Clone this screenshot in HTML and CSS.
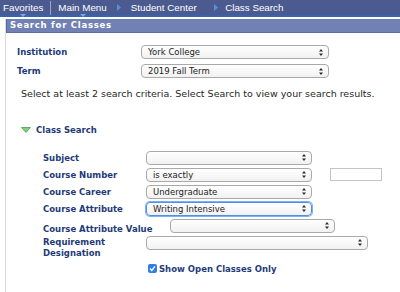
FILE: index.html
```html
<!DOCTYPE html>
<html>
<head>
<meta charset="utf-8">
<link rel="stylesheet" href="styles.css">
</head>
<body>
<div class="nav">
  <div class="nav-item nav-fav">Favorites<span class="caret"></span></div>
  <div class="nav-sep"></div>
  <div class="nav-item nav-main">Main Menu<span class="caret"></span></div>
  <svg class="crumb crumb-1" viewBox="0 0 4 7"><path d="M0 0L4 3.5L0 7z"/></svg>
  <div class="nav-item nav-student">Student Center</div>
  <svg class="crumb crumb-2" viewBox="0 0 4 7"><path d="M0 0L4 3.5L0 7z"/></svg>
  <div class="nav-item nav-class">Class Search</div>
</div>
<div class="page">
  <div class="titlebar">Search for Classes</div>
  <div class="content">
    <div class="row top-row">
      <div class="lbl lbl-top">Institution</div>
      <div class="sel sel-top"><span class="sel-text">York College</span><svg class="sel-arrow" viewBox="0 0 4 7"><path d="M2 0L4 2.6H0z M2 7L4 4.4H0z"/></svg></div>
    </div>
    <div class="row top-row term-row">
      <div class="lbl lbl-top">Term</div>
      <div class="sel sel-top"><span class="sel-text">2019 Fall Term</span><svg class="sel-arrow" viewBox="0 0 4 7"><path d="M2 0L4 2.6H0z M2 7L4 4.4H0z"/></svg></div>
    </div>
    <p class="hint">Select at least 2 search criteria. Select Search to view your search results.</p>
    <div class="section-head">
      <svg class="expander" viewBox="0 0 10 6"><path d="M0.5 0.5H9.5L5 5.5z"/></svg>
      <span>Class Search</span>
    </div>
    <div class="criteria">
      <div class="row crit">
        <div class="lbl lbl-crit">Subject</div>
        <div class="sel sel-crit"><span class="sel-text"></span><svg class="sel-arrow" viewBox="0 0 4 7"><path d="M2 0L4 2.6H0z M2 7L4 4.4H0z"/></svg></div>
      </div>
      <div class="row crit">
        <div class="lbl lbl-crit">Course Number</div>
        <div class="sel sel-crit"><span class="sel-text">is exactly</span><svg class="sel-arrow" viewBox="0 0 4 7"><path d="M2 0L4 2.6H0z M2 7L4 4.4H0z"/></svg></div>
        <div class="textbox"></div>
      </div>
      <div class="row crit">
        <div class="lbl lbl-crit">Course Career</div>
        <div class="sel sel-crit"><span class="sel-text">Undergraduate</span><svg class="sel-arrow" viewBox="0 0 4 7"><path d="M2 0L4 2.6H0z M2 7L4 4.4H0z"/></svg></div>
      </div>
      <div class="row crit">
        <div class="lbl lbl-crit">Course Attribute</div>
        <div class="sel sel-crit sel-focus"><span class="sel-text">Writing Intensive</span><svg class="sel-arrow" viewBox="0 0 4 7"><path d="M2 0L4 2.6H0z M2 7L4 4.4H0z"/></svg></div>
      </div>
      <div class="row crit crit-value">
        <div class="lbl lbl-value">Course Attribute Value</div>
        <div class="sel sel-value"><span class="sel-text"></span><svg class="sel-arrow" viewBox="0 0 4 7"><path d="M2 0L4 2.6H0z M2 7L4 4.4H0z"/></svg></div>
      </div>
      <div class="row crit crit-req">
        <div class="lbl lbl-crit lbl-req">Requirement Designation</div>
        <div class="sel sel-req"><span class="sel-text"></span><svg class="sel-arrow" viewBox="0 0 4 7"><path d="M2 0L4 2.6H0z M2 7L4 4.4H0z"/></svg></div>
      </div>
      <div class="check-row">
        <span class="checkbox"><svg viewBox="0 0 9 9"><path d="M2 4.6L3.8 6.4L7 2.4" /></svg></span>
        <span class="check-label">Show Open Classes Only</span>
      </div>
    </div>
  </div>
</div>
</body>
</html>
```

FILE: styles.css
```css
html, body {
  margin: 0;
  padding: 0;
  background: #ffffff;
}
body {
  width: 400px;
  height: 292px;
  overflow: hidden;
  font-family: "DejaVu Sans", Verdana, sans-serif;
}

/* top navigation */
.nav {
  display: flex;
  align-items: center;
  height: 15px;
  background: #4c5b8f;
  border-bottom: 2px solid #3464b4;
  font-family: "Liberation Sans", Arial, sans-serif;
  font-size: 9.8px;
  line-height: 15px;
  color: #ffffff;
}
.nav-item {
  position: relative;
  white-space: nowrap;
  height: 15px;
}
.nav-fav { margin-left: 3px; }
.nav-sep {
  width: 1px;
  height: 14px;
  margin-left: 7px;
  background: #9aa4c8;
  align-self: flex-end;
}
.nav-main { margin-left: 7px; }
.caret {
  position: absolute;
  left: 50%;
  bottom: -2px;
  margin-left: -3px;
  width: 0;
  height: 0;
  border-left: 3px solid transparent;
  border-right: 3px solid transparent;
  border-top: 3px solid #79a8e6;
}
.crumb {
  width: 4px;
  height: 7px;
  fill: #5b8ed6;
}
.crumb-1 { margin-left: 10px; }
.nav-student { margin-left: 10px; }
.crumb-2 { margin-left: 17px; }
.nav-class { margin-left: 7.5px; }

/* page */
.page {
  margin-top: 2px;
  margin-left: 5px;
  border-left: 1px solid #dcdcdc;
  height: 273px;
}
.titlebar {
  height: 13px;
  line-height: 13px;
  background: #7281b3;
  border-bottom: 1px solid #5d6ca2;
  border-left: 1px solid #58679c;
  padding-left: 3px;
  font-size: 8.5px;
  font-weight: bold;
  letter-spacing: 0.75px;
  color: #ffffff;
}
.content {
  padding-left: 11px;
}

.row {
  display: flex;
  align-items: center;
  height: 14px;
}
.top-row { margin-top: 12px; }
.term-row { margin-top: 5px; }

.lbl {
  flex: none;
  font-size: 8.5px;
  font-weight: bold;
  line-height: 12px;
  color: #1f3a78;
  white-space: nowrap;
}
.lbl-top { width: 124px; }
.lbl-crit { width: 103px; }
.lbl-value {
  width: 127px;
  align-self: flex-start;
  margin-top: 4.5px;
}
.lbl-req {
  white-space: normal;
  line-height: 11px;
  align-self: flex-start;
  margin-top: 1px;
}

/* select look */
.sel {
  flex: none;
  box-sizing: border-box;
  height: 14px;
  display: flex;
  align-items: center;
  justify-content: space-between;
  border: 1px solid #a9a9a9;
  border-radius: 4px;
  background: linear-gradient(#ffffff, #f1f1f1);
  padding: 0 5px 0 6px;
}
.sel-text {
  font-size: 8.5px;
  line-height: 12px;
  color: #222222;
  white-space: nowrap;
}
.sel-arrow {
  width: 4px;
  height: 7px;
  fill: #2a2a2a;
}
.sel-top { width: 188px; }
.sel-crit { width: 166px; }
.sel-value { width: 165px; }
.sel-req { width: 222px; }
.sel-focus {
  border: 1px solid #4f8fe8;
  box-shadow: 0 0 0 1px #7fb0f2;
}

.textbox {
  box-sizing: border-box;
  width: 52px;
  height: 13px;
  margin-left: 18px;
  border: 1px solid #c4c4c4;
  background: #ffffff;
}

.hint {
  margin: 9px 0 0 4px;
  font-size: 9.5px;
  line-height: 14px;
  color: #262626;
  white-space: nowrap;
}

.section-head {
  display: flex;
  align-items: center;
  margin: 22px 0 0 4px;
  height: 14px;
  font-size: 8.5px;
  font-weight: bold;
  color: #1f3a78;
}
.expander {
  width: 10px;
  height: 6px;
  margin-right: 5px;
  fill: #86cc86;
  stroke: #4c9c4c;
  stroke-width: 0.8;
}

.criteria {
  margin-top: 13.5px;
  padding-left: 26px;
}
.crit { margin-bottom: 3px; }
.crit-req {
  height: 23px;
  align-items: flex-start;
  margin-bottom: 0;
}

.check-row {
  display: flex;
  align-items: center;
  height: 12px;
  margin-top: 4px;
  padding-left: 105px;
}
.checkbox {
  box-sizing: border-box;
  width: 9px;
  height: 9px;
  border-radius: 2px;
  background: #2f7fe4;
  display: flex;
}
.checkbox svg {
  width: 9px;
  height: 9px;
  fill: none;
  stroke: #ffffff;
  stroke-width: 1.4;
}
.check-label {
  margin-left: 2px;
  font-size: 8.5px;
  font-weight: bold;
  color: #1f3a78;
  white-space: nowrap;
}
```
